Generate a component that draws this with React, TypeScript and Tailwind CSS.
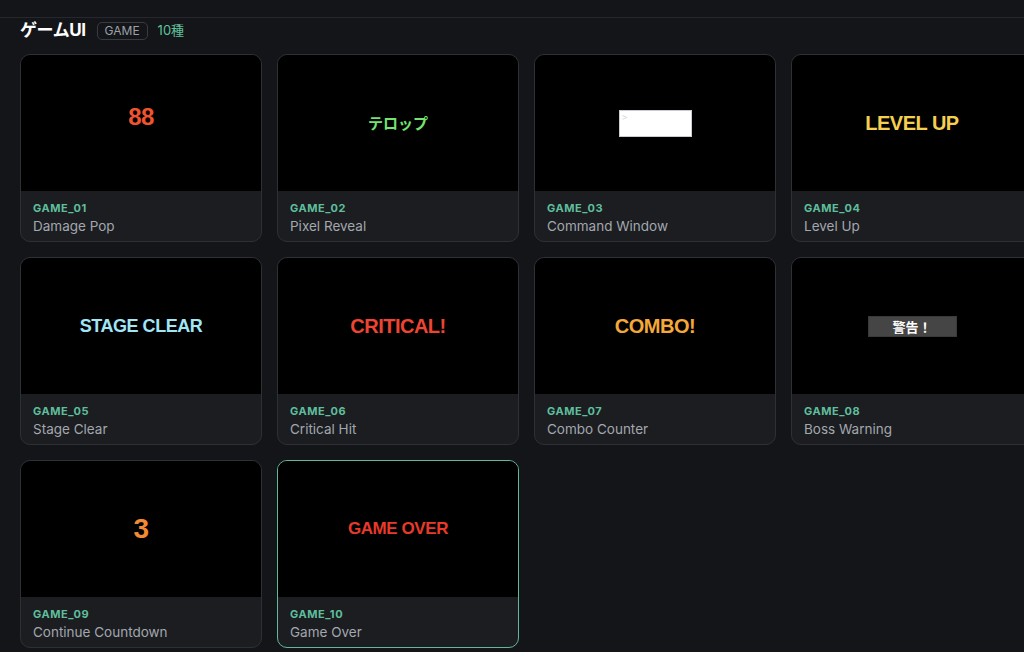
import React from 'react';

type Item = { code: string; title: string; preview: React.ReactNode; active?: boolean };

const fx = "font-['Liberation_Sans','Noto_Sans_CJK_JP',sans-serif] font-bold tracking-tight";

const items: Item[] = [
  { code: 'GAME_01', title: 'Damage Pop', preview: <span className={`${fx} text-[24px] text-[#f0532f] -translate-y-[6px]`}>88</span> },
  { code: 'GAME_02', title: 'Pixel Reveal', preview: <span className="font-['Noto_Sans_CJK_JP',sans-serif] font-bold text-[15px] text-[#72e46f]">テロップ</span> },
  {
    code: 'GAME_03',
    title: 'Command Window',
    preview: (
      <div className="relative w-[73px] h-[27px] bg-white border border-[#c9ccd2]">
        <span className="absolute left-[2px] top-[1px] text-[9px] leading-none text-[#d4d6da]">&gt;</span>
      </div>
    ),
  },
  { code: 'GAME_04', title: 'Level Up', preview: <span className={`${fx} text-[20px] text-[#f5cf4f]`}>LEVEL UP</span> },
  { code: 'GAME_05', title: 'Stage Clear', preview: <span className={`${fx} text-[18px] text-[#a0e6f6]`}>STAGE CLEAR</span> },
  { code: 'GAME_06', title: 'Critical Hit', preview: <span className={`${fx} text-[20px] text-[#ee4433]`}>CRITICAL!</span> },
  { code: 'GAME_07', title: 'Combo Counter', preview: <span className={`${fx} text-[20px] text-[#f5a83a]`}>COMBO!</span> },
  {
    code: 'GAME_08',
    title: 'Boss Warning',
    preview: (
      <div className="w-[89px] h-[21px] bg-[#454545] border border-[#3a3a3a] flex items-center justify-center">
        <span className="font-['Noto_Sans_CJK_JP',sans-serif] font-bold text-[13px] leading-none text-white">警告！</span>
      </div>
    ),
  },
  { code: 'GAME_09', title: 'Continue Countdown', preview: <span className={`${fx} text-[28px] text-[#f28a33]`}>3</span> },
  { code: 'GAME_10', title: 'Game Over', preview: <span className={`${fx} text-[17px] text-[#e8392b]`}>GAME OVER</span>, active: true },
];

const Card = ({ item }: { item: Item }) => (
  <div
    className={`rounded-[10px] border overflow-hidden bg-[#1b1d21] ${
      item.active ? 'border-[#62b898]' : 'border-[#2d3035]'
    }`}
  >
    <div className="h-[136px] bg-black flex items-center justify-center">{item.preview}</div>
    <div className="px-3 pt-[9px] pb-[6px]">
      <div className="text-[11px] leading-4 font-bold tracking-wider text-[#5fbf9c]">{item.code}</div>
      <div className="mt-px text-[13.5px] leading-[18px] text-[#a3a7ae]">{item.title}</div>
    </div>
  </div>
);

const App: React.FC = () => {
  return (
    <div className="w-screen h-[652px] overflow-hidden bg-[#141519] font-['Inter','Noto_Sans_CJK_JP',sans-serif]">
      <div className="h-[17px]" />
      <section className="border-t border-[#26282d] px-5 pt-[3px]">
        <div className="h-5 flex items-center mb-[13px]">
          <h2 className="text-[17px] font-bold text-white tracking-tight">ゲームUI</h2>
          <span className="ml-[11px] h-[18px] px-[7px] flex items-center rounded-[5px] border border-[#383b41] text-[12px] text-[#9ca0a8]">
            GAME
          </span>
          <span className="ml-[10px] text-[13px] text-[#5ec29e]">10種</span>
        </div>
        <div className="grid grid-cols-[repeat(4,242px)] gap-[15px]">
          {items.map((it) => (
            <Card key={it.code} item={it} />
          ))}
        </div>
      </section>
    </div>
  );
};

export default App;
